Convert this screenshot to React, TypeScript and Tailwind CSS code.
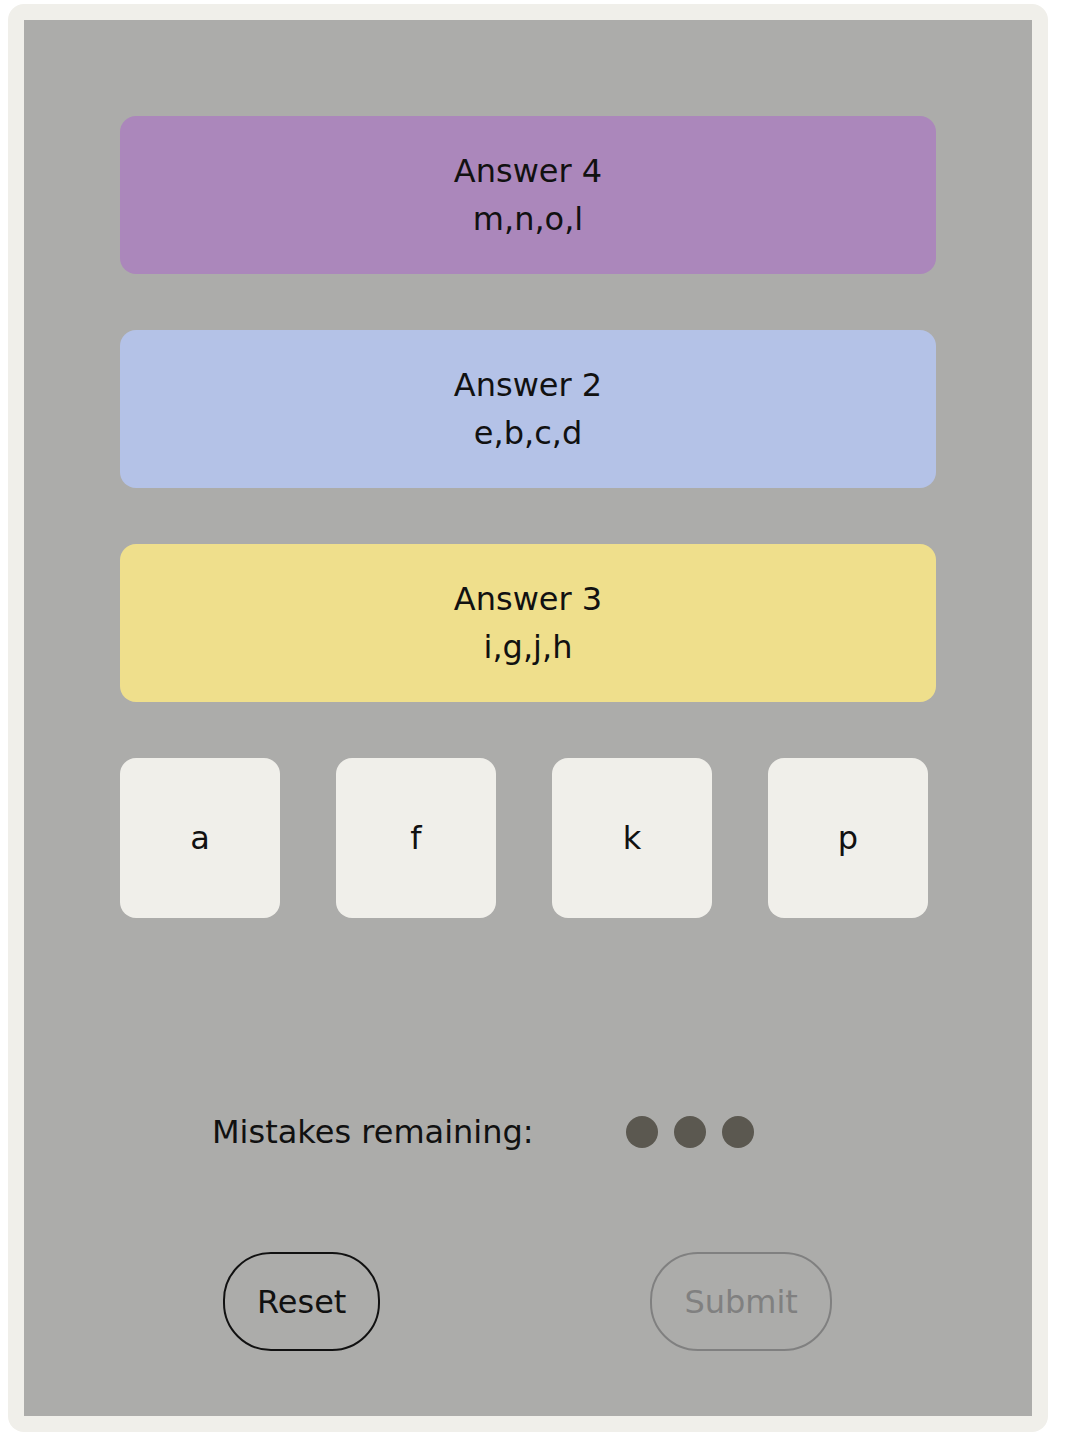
const groups = [
  { title: 'Answer 4', words: 'm,n,o,l', color: 'bg-[#ab87bb]' },
  { title: 'Answer 2', words: 'e,b,c,d', color: 'bg-[#b4c2e7]' },
  { title: 'Answer 3', words: 'i,g,j,h', color: 'bg-[#efdf8c]' },
];

const tiles = ['a', 'f', 'k', 'p'];

export default function App() {
  return (
    <div className="pl-2 pt-1 font-['DejaVu_Sans',sans-serif] text-[32px] leading-[48px] text-[#111]">
      <div className="w-[1040px] rounded-2xl bg-[#f0efea] p-4">
        <div className="h-[1396px] bg-[#acacaa] px-24 pt-24">
          <div className="flex flex-col gap-14">
            {groups.map((g) => (
              <div
                key={g.title}
                className={`${g.color} flex h-[158px] w-[816px] flex-col items-center justify-center rounded-2xl`}
              >
                <div>{g.title}</div>
                <div>{g.words}</div>
              </div>
            ))}
            <div className="flex gap-14">
              {tiles.map((t) => (
                <div
                  key={t}
                  className="flex h-40 w-40 items-center justify-center rounded-2xl bg-[#f0efea]"
                >
                  {t}
                </div>
              ))}
            </div>
          </div>

          <div className="mt-[190px] flex items-center pl-[92px]">
            <span>Mistakes remaining:</span>
            <div className="ml-[92px] flex gap-4">
              {[0, 1, 2].map((i) => (
                <span key={i} className="h-8 w-8 rounded-full bg-[#5b5850]" />
              ))}
            </div>
          </div>

          <div className="mt-[96px] flex items-start pl-[103px]">
            <button className="h-[99px] rounded-[48px] border-2 border-[#111] px-[32px] text-[#111]">
              Reset
            </button>
            <button
              disabled
              className="ml-[270px] h-[99px] rounded-[48px] border-2 border-[#808080] px-[32px] text-[#808080]"
            >
              Submit
            </button>
          </div>
        </div>
      </div>
    </div>
  );
}
